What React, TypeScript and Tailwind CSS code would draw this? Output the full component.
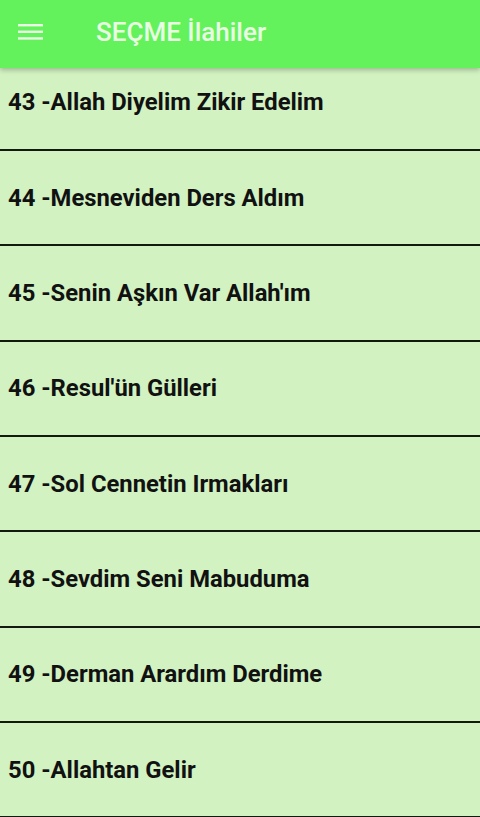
const songs = [
  '43 -Allah Diyelim Zikir Edelim',
  '44 -Mesneviden Ders Aldım',
  "45 -Senin Aşkın Var Allah'ım",
  "46 -Resul'ün Gülleri",
  '47 -Sol Cennetin Irmakları',
  '48 -Sevdim Seni Mabuduma',
  '49 -Derman Arardım Derdime',
  '50 -Allahtan Gelir',
];

function MenuIcon() {
  return (
    <svg width="25" height="16" viewBox="0 0 25 16" className="shrink-0">
      <rect x="0" y="0" width="25" height="2.4" fill="#eafde6" />
      <rect x="0" y="6.6" width="25" height="2.4" fill="#eafde6" />
      <rect x="0" y="13.2" width="25" height="2.4" fill="#eafde6" />
    </svg>
  );
}

export default function App() {
  return (
    <div
      className="h-[817px] w-[480px] overflow-hidden bg-[#d2f2c2] flex flex-col"
      style={{ fontFamily: 'Roboto, "Noto Sans", sans-serif' }}
    >
      <header className="relative z-10 h-[68px] shrink-0 bg-[#63f25b] flex items-center shadow-[0_2px_5px_rgba(0,0,0,0.25)]">
        <div className="pl-[18px] pb-[4px] flex items-center">
          <MenuIcon />
        </div>
        <h1 className="ml-[53px] pb-[4px] text-[26px] font-medium text-[#e8fde2]">
          SEÇME İlahiler
        </h1>
      </header>

      {/* list is scrolled a bit, first row sits partly under the bar */}
      <div className="-mt-[12.33px] flex flex-col">
        {songs.map((title) => (
          <div
            key={title}
            className="h-[95.33px] shrink-0 border-b-2 border-[#121a10] flex items-center px-[8px] pt-[2px]"
          >
            <span className="text-[23.8px] font-bold text-[#111] leading-none">{title}</span>
          </div>
        ))}
      </div>
    </div>
  );
}
